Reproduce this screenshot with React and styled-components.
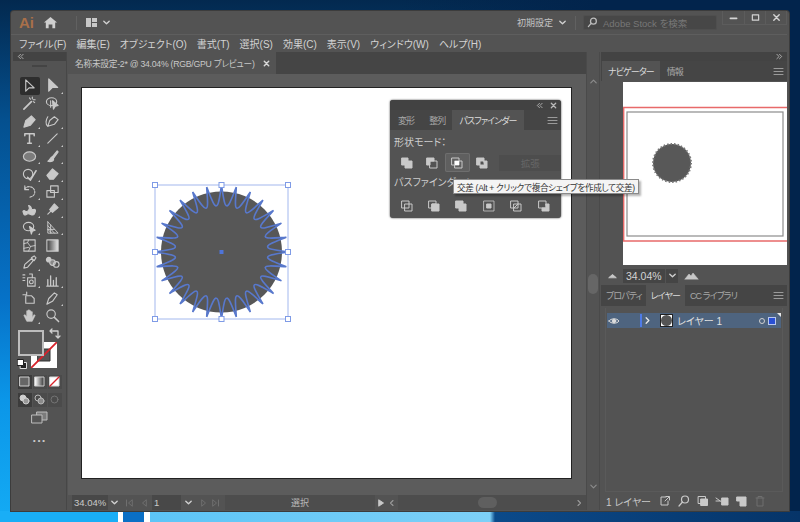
import React from "react";
import styled, { createGlobalStyle } from "styled-components";

const Global = createGlobalStyle`
  html, body {
    margin: 0;
    padding: 0;
    overflow: hidden;
  }
  * {
    box-sizing: border-box;
  }
`;

const Desktop = styled.div`
  width: 800px;
  height: 522px;
  padding: 11px;
  font-family: "Liberation Sans", "Noto Sans CJK JP", sans-serif;
  font-feature-settings: "palt";
  background:
    linear-gradient(90deg, #19aef6 0, #19aef6 118px, #fff 118px, #fff 123px, #0a6fc5 123px, #0a6fc5 144px, #fff 144px, #fff 150px, #5cc5f7 150px, #7dd0f7 490px, #0b4a8a 495px, #063468 100%) bottom / 100% 11px no-repeat,
    linear-gradient(90deg, transparent 0, transparent 400px, #02244c 600px, #02244c 100%),
    linear-gradient(180deg, #03294f 0, #04508f 120px, #0672c8 300px, #0b96e8 400px, #14abf4 100%);
`;

const Window = styled.div`
  width: 778px;
  height: 500px;
  display: flex;
  flex-direction: column;
  padding: 0 2px;
  background: #535353;
  border-radius: 3px 3px 0 0;
  box-shadow: 0 0 0 1px #3c3c3c;
  color: #cfcfcf;
`;

const TitleBar = styled.div`
  height: 24px;
  display: flex;
  align-items: center;
  padding-left: 8px;
  border-bottom: 1px solid #5e5e5e;
  margin: 0 0 0 -2px;
`;

const AiLogo = styled.span`
  font-size: 15px;
  font-weight: 700;
  color: #a9704a;
  width: 24px;
`;

const Divider = styled.div`
  width: 1px;
  height: 14px;
  background: #616161;
  margin: ${(p) => p.$margin || "0 8px"};
`;

const TitleLabel = styled.span`
  font-size: 9px;
  color: #c4c4c4;
  margin-left: auto;
`;

const SearchBox = styled.div`
  width: 134px;
  height: 15px;
  display: flex;
  align-items: center;
  gap: 5px;
  padding-left: 3px;
  background: #474747;
  border: 1px solid #4f4f4f;
  border-radius: 2px;
  font-size: 9.5px;
  color: #777;
  white-space: nowrap;
`;

const WinButtons = styled.div`
  align-self: flex-start;
  display: flex;
  margin-left: 5px;
  height: 14px;
  border: 1px solid #5c5c5c;
  border-top: none;
`;

const WinButton = styled.div`
  width: 21px;
  display: flex;
  align-items: center;
  justify-content: center;
  border-left: ${(p) => (p.$first ? "none" : "1px solid #5c5c5c")};
`;

const MenuBar = styled.div`
  height: 17px;
  display: flex;
  align-items: center;
  gap: 10px;
  padding-left: 6px;
  font-size: 10px;
  color: #d2d2d2;
  white-space: nowrap;
`;

const Body = styled.div`
  flex: 1;
  min-height: 0;
  display: flex;
  padding-bottom: 1px;
`;

const Toolbar = styled.div`
  width: 54px;
  margin-right: 1px;
  display: flex;
  flex-direction: column;
  align-items: stretch;
  border-right: 1px solid #474747;
`;

const DockHeader = styled.div`
  height: 9px;
  flex: none;
  display: flex;
  align-items: center;
  justify-content: ${(p) => (p.$right ? "flex-end" : "flex-start")};
  padding: 0 4px;
  background: #434343;
  font-size: 0;
`;

const Grip = styled.div`
  width: 15px;
  height: 2px;
  margin: 4px auto 10px;
  background: #444;
`;

const ToolGrid = styled.div`
  display: grid;
  grid-template-columns: 23px 23px;
  grid-auto-rows: 17.7px;
  padding-left: 5px;
`;

const ToolBtn = styled.div`
  position: relative;
  margin: 0 1.5px;
  display: flex;
  align-items: center;
  justify-content: center;
  background: ${(p) => (p.$on ? "#2e2e2e" : "transparent")};
  border-radius: 2px;
  ${(p) =>
    p.$more &&
    `&::after {
      content: "";
      position: absolute;
      right: 0;
      bottom: 1px;
      border-left: 2.5px solid transparent;
      border-bottom: 2.5px solid #c8c8c8;
    }`}
`;

const Icon = styled.svg`
  display: block;
  flex: none;
  fill: none;
  stroke: ${(p) => p.$color || "#c9c9c9"};
  stroke-width: ${(p) => p.$w || 1.2};
  stroke-linecap: round;
  stroke-linejoin: round;
`;

const ColorWell = styled.div`
  position: relative;
  height: 40px;
  margin-top: 5px;
`;

const FillSwatch = styled.div`
  position: absolute;
  left: 5px;
  top: 0;
  width: 26px;
  height: 26px;
  background: #5a5a5a;
  border: 2px solid #bdbdbd;
  z-index: 1;
`;

const StrokeSwatch = styled.div`
  position: absolute;
  left: 18px;
  top: 12px;
  width: 26px;
  height: 26px;
  background: #fff;
`;

const SwapIcon = styled.div`
  position: absolute;
  left: 36px;
  top: -3px;
`;

const DefaultIcon = styled.div`
  position: absolute;
  left: 4px;
  top: 29px;
`;

const ModeRow = styled.div`
  display: flex;
  justify-content: center;
  gap: ${(p) => p.$gap || 1}px;
  margin: ${(p) => p.$margin || "0"};
`;

const ModeBtn = styled.div`
  width: 14px;
  height: 14px;
  display: flex;
  align-items: center;
  justify-content: center;
  background: ${(p) => (p.$on ? "#3c3c3c" : "#4b4b4b")};
`;

const Dots = styled.div`
  margin-top: 7px;
  text-align: center;
  font-size: 13px;
  line-height: 10px;
  letter-spacing: 1px;
  font-weight: 700;
  color: #c8c8c8;
`;

const DocArea = styled.div`
  width: 518px;
  display: flex;
  flex-direction: column;
`;

const TabBar = styled.div`
  height: 22px;
  flex: none;
  display: flex;
  background: #454545;
`;

const DocTab = styled.div`
  width: 208px;
  display: flex;
  align-items: center;
  justify-content: space-between;
  padding: 0 6px 0 7px;
  background: #535353;
  font-size: 8.7px;
  letter-spacing: -0.25px;
  color: #c8c8c8;
  white-space: nowrap;
`;

const Canvas = styled.div`
  position: relative;
  flex: 1;
  min-height: 0;
  padding: 13px 14px 16px 13px;
  background: #5c5c5c;
`;

const Artboard = styled.div`
  position: relative;
  height: 100%;
  background: #fff;
  border: 1px solid #222;
`;

const ArtSvg = styled.svg`
  position: absolute;
  left: 65px;
  top: 89px;
`;

const FloatPanel = styled.div`
  position: absolute;
  left: 322px;
  top: 26px;
  width: 171px;
  height: 118px;
  background: #535353;
  border-radius: 3px;
  box-shadow: 0 0 2px #333;
  z-index: 5;
`;

const FloatHeader = styled.div`
  height: 10px;
  display: flex;
  align-items: center;
  justify-content: flex-end;
  gap: 7px;
  padding-right: 4px;
  background: #424242;
  border-radius: 3px 3px 0 0;
`;

const Tabs = styled.div`
  height: ${(p) => p.$h || 20}px;
  flex: none;
  display: flex;
  align-items: stretch;
  padding-left: ${(p) => p.$pad || 0}px;
  background: #454545;
  font-size: 9px;
  letter-spacing: -0.9px;
`;

const Tab = styled.div`
  display: flex;
  align-items: center;
  padding: 0 ${(p) => p.$pad || 7}px;
  background: ${(p) => (p.$on ? "#535353" : "transparent")};
  color: ${(p) => (p.$on ? "#dcdcdc" : "#a8a8a8")};
  white-space: nowrap;
`;

const TabMenu = styled.div`
  margin-left: auto;
  width: 18px;
  display: flex;
  align-items: center;
  justify-content: center;
`;

const PanelLabel = styled.div`
  font-size: 10px;
  line-height: 14px;
  color: #cdcdcd;
  padding-left: 4px;
  white-space: nowrap;
  margin: ${(p) => p.$margin || "0"};
`;

const ShapeRow = styled.div`
  display: flex;
  align-items: center;
  padding-left: 5px;
  margin-top: 3px;
`;

const PathBtn = styled.div`
  width: ${(p) => p.$w || 25}px;
  height: 19px;
  display: flex;
  align-items: center;
  justify-content: center;
  ${(p) =>
    p.$on &&
    `background: #5f5f5f;
     box-shadow: inset 0 0 0 1px #6e6e6e;
     border-radius: 2px;`}
`;

const ExpandBtn = styled.div`
  width: 62px;
  height: 16px;
  margin-left: 5px;
  display: flex;
  align-items: center;
  justify-content: center;
  background: #4d4d4d;
  font-size: 9.5px;
  color: #666;
`;

const PathRow = styled.div`
  display: flex;
  padding-left: 3px;
  margin-top: 6px;
`;

const Tooltip = styled.div`
  position: absolute;
  left: 63px;
  top: 79px;
  height: 15px;
  padding: 0 3px;
  display: flex;
  align-items: center;
  background: #f4f4f4;
  border: 1px solid #8a8a8a;
  box-shadow: 2px 2px 2px rgba(0, 0, 0, 0.3);
  font-size: 8.6px;
  letter-spacing: -0.32px;
  color: #333;
  white-space: nowrap;
  z-index: 6;
`;

const StatusBar = styled.div`
  height: 15px;
  flex: none;
  display: flex;
  align-items: stretch;
  padding-left: 4px;
  background: #535353;
  font-size: 9px;
`;

const StatusField = styled.div`
  width: ${(p) => p.$w}px;
  display: flex;
  align-items: center;
  padding-left: 2px;
  background: ${(p) => p.$bg || "#484848"};
  color: #c8c8c8;
  font-size: 9.5px;
`;

const StatusCell = styled.div`
  width: ${(p) => p.$w}px;
  flex: none;
  display: flex;
  align-items: center;
  justify-content: center;
  gap: ${(p) => p.$gap || 0}px;
`;

const StatusLabel = styled.div`
  width: 150px;
  display: flex;
  align-items: center;
  justify-content: center;
  background: #4d4d4d;
  color: #b8b8b8;
`;

const HScroll = styled.div`
  flex: 1;
  display: flex;
  align-items: center;
  justify-content: flex-end;
  position: relative;
  padding-right: 3px;
  background: #4d4d4d;
`;

const HThumb = styled.div`
  position: absolute;
  left: 80px;
  top: 2px;
  width: 19px;
  height: 11px;
  border-radius: 6px;
  background: #5f5f5f;
`;

const VScroll = styled.div`
  width: 14px;
  margin-right: 1px;
  display: flex;
  flex-direction: column;
  align-items: center;
  justify-content: space-between;
  padding: 25px 0 19px;
  background: #535353;
  border-left: 1px solid #4a4a4a;
  border-right: 1px solid #4a4a4a;
`;

const VThumb = styled.div`
  width: 10px;
  height: 20px;
  border-radius: 5px;
  background: #666;
`;

const RightDock = styled.div`
  width: 186px;
  display: flex;
  flex-direction: column;
`;

const PreviewRow = styled.div`
  height: 184px;
  flex: none;
  padding-left: 22px;
  margin-top: 1px;
`;

const ZoomRow = styled.div`
  height: 19px;
  flex: none;
  display: flex;
  align-items: center;
  padding-left: 6px;
`;

const ZoomField = styled.div`
  width: 42px;
  height: 14px;
  margin-left: 5px;
  padding-left: 3px;
  display: flex;
  align-items: center;
  background: #454545;
  font-size: 10.5px;
  color: #d4d4d4;
`;

const ZoomChevron = styled.div`
  width: 12px;
  height: 14px;
  margin: 0 6px 0 1px;
  display: flex;
  align-items: center;
  justify-content: center;
  background: #454545;
`;

const LayerList = styled.div`
  flex: 1;
  min-height: 0;
  margin: 2px 4px 0;
  padding-top: 5px;
  border: 1px solid #5a5a5a;
  border-top: none;
`;

const LayerRow = styled.div`
  position: relative;
  height: 15px;
  margin: 0 1px;
  display: flex;
  align-items: center;
  background: #4e647f;
  font-size: 10px;
  color: #e0e0e0;
  &::after {
    content: "";
    position: absolute;
    top: 0;
    right: 0;
    border-left: 4px solid transparent;
    border-top: 4px solid #e8e8e8;
  }
`;

const EyeCell = styled.div`
  margin: 0 11px 0 1px;
`;

const LayerThumb = styled.div`
  width: 13px;
  height: 13px;
  margin: 0 4px 0 8px;
  display: flex;
  align-items: center;
  justify-content: center;
  background: #fff;
  border: 1px solid #222;
`;

const LayerSpot = styled.div`
  width: 11px;
  height: 11px;
  border-radius: 50%;
  background: #555;
`;

const Target = styled.div`
  margin-left: auto;
  width: 6px;
  height: 6px;
  border-radius: 50%;
  border: 1px solid #d0d0d0;
`;

const SelectedMark = styled.div`
  width: 8px;
  height: 8px;
  margin: 0 5px 0 3px;
  background: #2a50d4;
  border: 1px solid #b9c8ee;
`;

const BlueBar = styled.div`
  width: 2px;
  height: 13px;
  margin: 0 1px 0 9px;
  background: #4f7be8;
`;

const LayerFooter = styled.div`
  height: 18px;
  flex: none;
  display: flex;
  align-items: center;
  padding-left: 5px;
  font-size: 10px;
  color: #c8c8c8;
  white-space: nowrap;
`;

const FooterIcons = styled.div`
  display: flex;
  align-items: center;
  gap: 5px;
  margin-left: 7px;
`;

const TitleGap = styled.span`
  width: ${(p) => p.$w}px;
`;

const S = ({ size = 16, w, color, view, children }) => (
  <Icon width={size} height={size} viewBox={view || "0 0 16 16"} $w={w} $color={color}>
    {children}
  </Icon>
);

const Chevron = ({ dim }) => (
  <S size={9} w={1.5} color={dim ? "#777" : "#d0d0d0"} view="0 0 10 10">
    <path d="M2 3.5 5 6.5 8 3.5" />
  </S>
);

const Hamburger = ({ color = "#9a9a9a" }) => (
  <S size={11} w={1.1} color={color} view="0 0 11 11">
    <path d="M1 2.5H10M1 5.5H10M1 8.5H10" />
  </S>
);

const F = "#c9c9c9";

const tools = [
  { on: true, d: <path d="M4 2V14L7.5 10.5H13Z" /> },
  { more: true, d: <path d="M4 1V14L8 10H13.5Z" fill={F} /> },
  { d: <><path d="M2 14 10 6" strokeWidth="1.8" /><path d="M11 1V3M14 4H12M13.5 7 12 6M8 2 9 3.5" /></> },
  { d: <><ellipse cx="7" cy="6" rx="5.5" ry="4.2" /><path d="M6 5V12M8 5 14 10 11 11 9 14Z" fill={F} /></> },
  { more: true, d: <path d="M2 14 4 7 10 2 14 6 9 12Z" fill={F} /> },
  { more: true, d: <><path d="M3 13 5 7 10 3 14 6 10 11Z" /><path d="M3 13C0 11 1 6 3 3" /></> },
  { more: true, d: <path d="M3 3H13V5M3 5V3M8 3V13M6 13H10" strokeWidth="1.6" /> },
  { more: true, d: <path d="M3 13 13 3" /> },
  { more: true, d: <ellipse cx="8" cy="8" rx="6.5" ry="5" fill="#7c7c7c" /> },
  { more: true, d: <><path d="M8 8 13 2 14 3 9 10Z" fill={F} /><path d="M8 8C5 9 6 12 3 13 6 14 10 13 9 10Z" fill={F} /></> },
  { more: true, d: <><circle cx="6.5" cy="7.5" r="5" /><path d="M6 11 9 14 15 4" strokeWidth="1.6" /></> },
  { more: true, d: <path d="M2 9 8 2 14 7 9 13H5Z" fill={F} /> },
  { more: true, d: <><path d="M3 5C5 2 11 2 13 6S12 14 8 14" strokeDasharray="2 1.4" /><path d="M3 2V6H7" /></> },
  { more: true, d: <><rect x="2" y="7" width="8" height="7" /><rect x="6" y="2" width="8" height="7" /></> },
  { more: true, d: <path d="M1 10C3 7 4 13 7 9S5 3 8 4 9 9 12 8 15 10 13 13 8 11 5 13 2 13 1 10Z" fill={F} /> },
  { more: true, d: <><path d="M5 8 10 2 14 6 8 11Z" fill={F} /><path d="M6 10 3 13" /></> },
  { more: true, d: <><ellipse cx="7" cy="7" rx="5.5" ry="4.5" /><path d="M8 7 14 11 11 12 10 15Z" fill={F} /></> },
  { more: true, d: <path d="M3 2V14H14L3 2ZM3 6 10 14M3 10 7 14M6 5V14M3 10H10" strokeWidth="1" /> },
  { d: <><rect x="2" y="2" width="12" height="12" /><path d="M2 6 6 5 7 2M6 5 9 9 14 8M9 9 7 14M2 11 7 10" strokeWidth="1" /></> },
  { d: <><rect x="2" y="2" width="12" height="12" fill="url(#gradtool)" /></> },
  { more: true, d: <path d="M2 14 3 10 10 4 12 6 6 13ZM10 3 13 1 15 3 13 6Z" /> },
  { d: <><circle cx="4" cy="5" r="2.5" fill={F} /><circle cx="8" cy="8" r="3" fill="#888" /><circle cx="12" cy="10" r="3" /></> },
  { more: true, d: <><rect x="6" y="5" width="8" height="9" /><circle cx="10" cy="9.5" r="2" /><path d="M8 1H11V5M1 2H3M1 5H3M1 8H3" /></> },
  { more: true, d: <path d="M2 14H14M3 13V7M6 13V3M9 13V8M12 13V5" strokeWidth="1.4" /> },
  { d: <><path d="M5 1V4M1 4H4" /><path d="M4 5H10L13 8V13H4Z" /></> },
  { more: true, d: <path d="M2 14 4 8 10 2 13 4 8 11Z" /> },
  { more: true, d: <path d="M5 14 2 8 3 7 5 9V3H6.5V7.5V2H8V7.5V3H9.5V8V4H11V10L13 7 14 8 11 14Z" fill={F} strokeWidth="0.6" /> },
  { d: <><circle cx="6.5" cy="6.5" r="4.5" /><path d="M10 10 14.5 14.5" strokeWidth="1.6" /></> },
];

const shapeIcons = [
  <path key="a" d="M1 1H7V4H11V11H4V8H1Z" fill={F} />,
  <><path d="M1 1H8V4H4V8H1Z" fill={F} /><rect x="4" y="4" width="7" height="7" /></>,
  <><rect x="1" y="1" width="7" height="7" /><rect x="4" y="4" width="7" height="7" /><rect x="4" y="4" width="4" height="4" fill="#fff" stroke="none" /></>,
  <><path d="M1 1H8V4H4V8H1Z" fill={F} /><path d="M8 4H11V11H4V8H8Z" fill={F} /></>,
];

const pathIcons = [
  <><rect x="1" y="1" width="7" height="7" /><rect x="4" y="4" width="7" height="7" /></>,
  <><path d="M1 1H8V4H4V8H1Z" /><rect x="4" y="4" width="7" height="7" fill={F} /></>,
  <path d="M1 1H8V4H11V11H4V8H1Z" fill={F} />,
  <><rect x="1" y="1" width="10" height="10" strokeWidth="0.8" /><rect x="4" y="4" width="4" height="4" fill={F} /></>,
  <><rect x="1" y="1" width="7" height="7" /><rect x="4" y="4" width="7" height="7" /><path d="M4 8 8 4" /></>,
  <><path d="M1 1H8V8H1Z" /><path d="M8 4H11V11H4V8H8Z" fill={F} /></>,
];

// trimmed star: sharp tips, rounded U-shaped valleys
const starPath = (cx, cy, count) => {
  const step = (Math.PI * 2) / count;
  const pt = (r, a) => `${(cx + r * Math.sin(a)).toFixed(2)} ${(cy - r * Math.cos(a)).toFixed(2)}`;
  let d = `M${pt(66.5, 0)}`;
  for (let i = 0; i < count; i++) {
    const a = i * step;
    d += ` C${pt(57, a + step * 0.13)} ${pt(46, a + step * 0.26)} ${pt(46.5, a + step * 0.5)}`;
    d += ` C${pt(46, a + step * 0.74)} ${pt(57, a + step * 0.87)} ${pt(66.5, a + step)}`;
  }
  return d + "Z";
};

const handles = [
  [8, 8], [74.5, 8], [141, 8],
  [8, 75], [141, 75],
  [8, 142], [74.5, 142], [141, 142],
];

const Art = () => {
  const star = starPath(74.5, 75, 28);
  return (
    <ArtSvg width="150" height="150" viewBox="0 0 150 150">
      <path d={star} fill="#3f5796" />
      <circle cx="74.5" cy="75" r="60.5" fill="#575757" />
      <path d={star} fill="none" stroke="#5878cc" strokeWidth="1.6" />
      <rect x="8" y="8" width="133" height="134" fill="none" stroke="#a3b8ee" strokeWidth="1" />
      {handles.map(([x, y]) => (
        <rect key={`${x}-${y}`} x={x - 2.5} y={y - 2.5} width="5" height="5" fill="#fff" stroke="#7f9be6" />
      ))}
      <rect x="72.5" y="73" width="4" height="4" fill="#4f74d8" />
    </ArtSvg>
  );
};

const App = () => (
  <>
    <Global />
    <Desktop>
      <Window>
        <TitleBar>
          <AiLogo>Ai</AiLogo>
          <S size={15} color="#cfcfcf" view="0 0 16 16">
            <path d="M1 8 8 2 15 8H13V14H10V10H6V14H3V8Z" fill="#cfcfcf" stroke="none" />
          </S>
          <Divider $margin="0 8px 0 18px" />
          <S size={13} view="0 0 13 13">
            <path d="M1 2H6V11H1ZM7 2H12V6H7ZM7 7H12V11H7Z" fill="#c8c8c8" stroke="none" />
          </S>
          <TitleGap $w={4} />
          <Chevron />
          <TitleLabel>初期設定</TitleLabel>
          <TitleGap $w={5} />
          <Chevron />
          <Divider $margin="0 7px 0 8px" />
          <SearchBox>
            <S size={11} w={1.4} color="#bdbdbd" view="0 0 12 12">
              <circle cx="7" cy="4.5" r="3.2" />
              <path d="M4.5 7 1.5 10.5" />
            </S>
            Adobe Stock を検索
          </SearchBox>
          <WinButtons>
            <WinButton $first>
              <S size={9} w={1.8} color="#d4d4d4" view="0 0 10 10"><path d="M1.5 6H8.5" /></S>
            </WinButton>
            <WinButton>
              <S size={9} w={1.3} color="#d4d4d4" view="0 0 10 10"><rect x="1.5" y="2" width="7" height="6" /></S>
            </WinButton>
            <WinButton>
              <S size={9} w={1.6} color="#d4d4d4" view="0 0 10 10"><path d="M2 2 8 8M8 2 2 8" /></S>
            </WinButton>
          </WinButtons>
        </TitleBar>
        <MenuBar>
          <span>ファイル(F)</span>
          <span>編集(E)</span>
          <span>オブジェクト(O)</span>
          <span>書式(T)</span>
          <span>選択(S)</span>
          <span>効果(C)</span>
          <span>表示(V)</span>
          <span>ウィンドウ(W)</span>
          <span>ヘルプ(H)</span>
        </MenuBar>
        <Body>
          <Toolbar>
            <DockHeader>
              <S size={7} w={1} color="#b8b8b8" view="0 0 8 8"><path d="M4 1.5 1.5 4 4 6.5M7 1.5 4.5 4 7 6.5" /></S>
            </DockHeader>
            <Grip />
            <ToolGrid>
              {tools.map((t, i) => (
                <ToolBtn key={i} $on={t.on} $more={t.more}>
                  <S size={15}>
                    {i === 19 && (
                      <defs>
                        <linearGradient id="gradtool">
                          <stop offset="0" stopColor="#3a3a3a" />
                          <stop offset="1" stopColor="#e8e8e8" />
                        </linearGradient>
                      </defs>
                    )}
                    {t.d}
                  </S>
                </ToolBtn>
              ))}
            </ToolGrid>
            <ColorWell>
              <FillSwatch />
              <StrokeSwatch>
                <S size={26} w={1.8} color="#d8232a" view="0 0 26 26">
                  <rect x="7" y="7" width="12" height="12" fill="#555" stroke="#333" strokeWidth="1" />
                  <path d="M0 26 26 0" />
                </S>
              </StrokeSwatch>
              <SwapIcon>
                <S size={12} w={1.3} color="#d0d0d0" view="0 0 12 12">
                  <path d="M2 4H9V10M1 4 3 2M1 4 3 6M9 11 7 9M9 11 11 9" />
                </S>
              </SwapIcon>
              <DefaultIcon>
                <S size={10} w={1} color="#ddd" view="0 0 10 10">
                  <rect x="3.5" y="3.5" width="6" height="6" fill="#222" />
                  <rect x="0.5" y="0.5" width="6" height="6" fill="#fff" stroke="#222" />
                </S>
              </DefaultIcon>
            </ColorWell>
            <ModeRow $margin="5px 0 0 0">
              <ModeBtn $on>
                <S size={11} w={1} color="#cfcfcf" view="0 0 11 11"><rect x="1" y="1" width="9" height="9" fill="#666" /></S>
              </ModeBtn>
              <ModeBtn>
                <S size={11} w={1} color="#cfcfcf" view="0 0 11 11">
                  <defs>
                    <linearGradient id="gradmode">
                      <stop offset="0" stopColor="#fff" />
                      <stop offset="1" stopColor="#333" />
                    </linearGradient>
                  </defs>
                  <rect x="1" y="1" width="9" height="9" fill="url(#gradmode)" />
                </S>
              </ModeBtn>
              <ModeBtn>
                <S size={11} w={1.4} color="#d8232a" view="0 0 11 11">
                  <rect x="1" y="1" width="9" height="9" fill="#fff" stroke="#ddd" strokeWidth="1" />
                  <path d="M1 10 10 1" />
                </S>
              </ModeBtn>
            </ModeRow>
            <ModeRow $margin="4px 0 0 0">
              <ModeBtn $on>
                <S size={11} w={1} color="#cfcfcf" view="0 0 11 11">
                  <circle cx="4" cy="4" r="3" fill="#cfcfcf" />
                  <circle cx="7" cy="7" r="3" fill="#999" />
                </S>
              </ModeBtn>
              <ModeBtn>
                <S size={11} w={1} color="#b8b8b8" view="0 0 11 11">
                  <circle cx="4" cy="4" r="3" />
                  <circle cx="7" cy="7" r="3" fill="#8a8a8a" />
                </S>
              </ModeBtn>
              <ModeBtn>
                <S size={11} w={1} color="#747474" view="0 0 11 11"><circle cx="5.5" cy="5.5" r="3.5" /></S>
              </ModeBtn>
            </ModeRow>
            <ModeRow $margin="2px 0 0 0">
              <S size={17} w={1} color="#bdbdbd" view="0 0 17 13">
                <rect x="6" y="1" width="10" height="8" fill="#7c7c7c" />
                <rect x="1" y="4" width="10" height="8" fill="#555" />
              </S>
            </ModeRow>
            <Dots>...</Dots>
          </Toolbar>
          <DocArea>
            <TabBar>
              <DocTab>
                <span>名称未設定-2* @ 34.04% (RGB/GPU プレビュー)</span>
                <S size={7} w={1.7} color="#d8d8d8" view="0 0 8 8"><path d="M1.5 1.5 6.5 6.5M6.5 1.5 1.5 6.5" /></S>
              </DocTab>
            </TabBar>
            <Canvas>
              <Artboard>
                <Art />
              </Artboard>
              <FloatPanel>
                <FloatHeader>
                  <S size={7} w={1} color="#b8b8b8" view="0 0 8 8"><path d="M4 1.5 1.5 4 4 6.5M7 1.5 4.5 4 7 6.5" /></S>
                  <S size={7} w={1.5} color="#b8b8b8" view="0 0 8 8"><path d="M1.5 1.5 6.5 6.5M6.5 1.5 1.5 6.5" /></S>
                </FloatHeader>
                <Tabs>
                  <Tab $pad={8}>変形</Tab>
                  <Tab $pad={7}>整列</Tab>
                  <Tab $on $pad={7}>パスファインダー</Tab>
                  <TabMenu><Hamburger /></TabMenu>
                </Tabs>
                <PanelLabel $margin="6px 0 0 0">形状モード：</PanelLabel>
                <ShapeRow>
                  {shapeIcons.map((d, i) => (
                    <PathBtn key={i} $on={i === 2}>
                      <S size={12} w={1} view="0 0 12 12">{d}</S>
                    </PathBtn>
                  ))}
                  <ExpandBtn>拡張</ExpandBtn>
                </ShapeRow>
                <PanelLabel $margin="4px 0 0 0">パスファインダー：</PanelLabel>
                <PathRow>
                  {pathIcons.map((d, i) => (
                    <PathBtn key={i} $w={27.4}>
                      <S size={12} w={1} view="0 0 12 12">{d}</S>
                    </PathBtn>
                  ))}
                </PathRow>
                <Tooltip>交差 (Alt + クリックで複合シェイプを作成して交差)</Tooltip>
              </FloatPanel>
            </Canvas>
            <StatusBar>
              <StatusField $w={36}>34.04%</StatusField>
              <StatusCell $w={13}><Chevron /></StatusCell>
              <StatusCell $w={31} $gap={7}>
                <S size={8} w={1} color="#6f6f6f" view="0 0 8 8"><path d="M1.5 1V7M7 1 3.5 4 7 7Z" /></S>
                <S size={8} w={1} color="#6f6f6f" view="0 0 8 8"><path d="M6 1 2.5 4 6 7Z" /></S>
              </StatusCell>
              <StatusField $w={29}>1</StatusField>
              <StatusCell $w={14}><Chevron /></StatusCell>
              <StatusCell $w={30} $gap={4}>
                <S size={8} w={1} color="#6f6f6f" view="0 0 8 8"><path d="M2 1 5.5 4 2 7Z" /></S>
                <S size={8} w={1} color="#6f6f6f" view="0 0 8 8"><path d="M1 1 4.5 4 1 7ZM6.5 1V7" /></S>
              </StatusCell>
              <StatusLabel>選択</StatusLabel>
              <StatusCell $w={11}>
                <S size={8} color="#c8c8c8" w={1} view="0 0 8 8"><path d="M2 1 6.5 4 2 7Z" fill="#c8c8c8" /></S>
              </StatusCell>
              <StatusCell $w={12}>
                <S size={8} color="#9a9a9a" w={1.1} view="0 0 8 8"><path d="M5 1.5 2.5 4 5 6.5" /></S>
              </StatusCell>
              <HScroll>
                <HThumb />
                <S size={8} color="#9a9a9a" w={1.1} view="0 0 8 8"><path d="M3 1.5 5.5 4 3 6.5" /></S>
              </HScroll>
            </StatusBar>
          </DocArea>
          <VScroll>
            <S size={9} w={1.3} color="#8c8c8c" view="0 0 10 10"><path d="M2 6.5 5 3.5 8 6.5" /></S>
            <VThumb />
            <S size={9} w={1.3} color="#8c8c8c" view="0 0 10 10"><path d="M2 3.5 5 6.5 8 3.5" /></S>
          </VScroll>
          <RightDock>
            <DockHeader $right>
              <S size={7} w={1} color="#b8b8b8" view="0 0 8 8"><path d="M1 1.5 3.5 4 1 6.5M4 1.5 6.5 4 4 6.5" /></S>
            </DockHeader>
            <Tabs $pad={1}>
              <Tab $on $pad={6}>ナビゲーター</Tab>
              <Tab $pad={7}>情報</Tab>
              <TabMenu><Hamburger /></TabMenu>
            </Tabs>
            <PreviewRow>
              <svg width="164" height="183" viewBox="0 0 164 183" style={{ display: "block" }}>
                <rect width="164" height="183" fill="#fff" />
                <rect x="4" y="30" width="156" height="124" fill="none" stroke="#8c8c8c" strokeWidth="1.2" />
                <path d="M0 25.5H164M0 159H164" stroke="#e86a6a" strokeWidth="1.5" />
                <path d="M0.7 25V159" stroke="#e86a6a" strokeWidth="1.4" />
                <circle cx="49" cy="81" r="19" fill="#585858" stroke="#777" strokeWidth="2" strokeDasharray="1.5 2" />
              </svg>
            </PreviewRow>
            <ZoomRow>
              <S size={11} color="#c8c8c8" w={1} view="0 0 11 11"><path d="M2 7.5 5.5 4.5 9 7.5Z" fill="#c8c8c8" /></S>
              <ZoomField>34.04%</ZoomField>
              <ZoomChevron><Chevron /></ZoomChevron>
              <S size={15} color="#c8c8c8" w={0.6} view="0 0 15 11"><path d="M1 9 5 4 7 6 9 3 14 9Z" fill="#c8c8c8" /></S>
            </ZoomRow>
            <Tabs $pad={1} $h={21}>
              <Tab $pad={4}>プロパティ</Tab>
              <Tab $on $pad={5}>レイヤー</Tab>
              <Tab $pad={5}>CC ライブラリ</Tab>
              <TabMenu><Hamburger /></TabMenu>
            </Tabs>
            <LayerList>
              <LayerRow>
                <EyeCell>
                  <S size={12} w={1} color="#dcdcdc" view="0 0 12 12">
                    <path d="M1 6C3 3 9 3 11 6 9 9 3 9 1 6Z" />
                    <circle cx="6" cy="6" r="1.8" fill="#dcdcdc" />
                  </S>
                </EyeCell>
                <BlueBar />
                <S size={9} w={1.5} color="#e8e8e8" view="0 0 10 10"><path d="M3.5 2 6.5 5 3.5 8" /></S>
                <LayerThumb><LayerSpot /></LayerThumb>
                レイヤー 1
                <Target />
                <SelectedMark />
              </LayerRow>
            </LayerList>
            <LayerFooter>
              1 レイヤー
              <FooterIcons>
                <S size={14} w={1} view="0 0 14 14"><path d="M8 3H3V11H10V7M7 7 11 3M8 2.5H11.5V6" /></S>
                <S size={14} w={1.2} view="0 0 14 14"><circle cx="8" cy="5.5" r="3.5" /><path d="M5.5 8 2 12" /></S>
                <S size={14} w={1} view="0 0 14 14"><rect x="2.5" y="2.5" width="7" height="7" /><rect x="5" y="5" width="6.5" height="6.5" fill={F} /></S>
                <S size={14} w={1} view="0 0 14 14"><path d="M7 4H13V11H7ZM1 4 6 7.5M1 7H5" fill={F} /></S>
                <S size={14} w={1} view="0 0 14 14"><path d="M3 3H12V12H6V7H3Z" fill={F} /></S>
                <S size={14} w={1} color="#6f6f6f" view="0 0 14 14"><path d="M3 4H11M5 4V2.5H9V4M4 4V12H10V4" /></S>
              </FooterIcons>
            </LayerFooter>
          </RightDock>
        </Body>
      </Window>
    </Desktop>
  </>
);

export default App;
